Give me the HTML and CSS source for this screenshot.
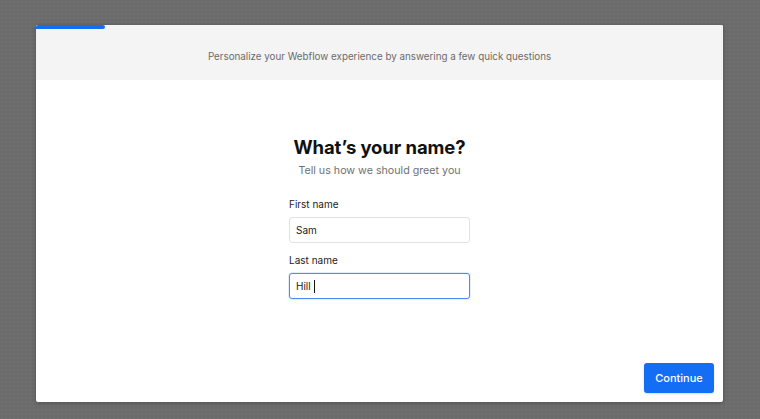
FILE: index.html
```html
<!DOCTYPE html>
<html lang="en">

<head>
    <meta charset="UTF-8">
    <meta name="viewport" content="width=device-width, initial-scale=1.0">
    <title>Personalize Webflow</title>
    <link rel="stylesheet" href="styles.css">
</head>

<body>
    <div class="modal">
        <div class="modal-header">
            <div class="progress"></div>
            <p class="intro">Personalize your Webflow experience by answering a few quick questions</p>
        </div>

        <div class="modal-body">
            <h1 class="title">What’s your name?</h1>
            <p class="subtitle">Tell us how we should greet you</p>

            <form class="name-form">
                <label class="field">
                    <span class="field-label">First name</span>
                    <input class="field-input" type="text" value="Sam">
                </label>
                <label class="field">
                    <span class="field-label">Last name</span>
                    <span class="field-input focused">Hill<span class="caret"></span></span>
                </label>
            </form>
        </div>

        <div class="modal-footer">
            <button class="continue-button">Continue</button>
        </div>
    </div>
</body>

</html>
```

FILE: styles.css
```css
html,
body {
    height: 100%;
}

body {
    margin: 0;
    font-family: Inter, 'Noto Sans', sans-serif;
    background-color: #6b6b6b;
    background-image: radial-gradient(rgba(255, 255, 255, 0.03) 1px, transparent 1px);
    background-size: 4px 4px;
    padding: 25px 37px 17px 36px;
    box-sizing: border-box;
}

.modal {
    height: 377px;
    background-color: #fff;
    border-radius: 2px;
    overflow: hidden;
    display: flex;
    flex-direction: column;
    box-shadow: 0 1px 4px rgba(0, 0, 0, 0.25);
}

.modal-header {
    position: relative;
    height: 55px;
    box-sizing: border-box;
    padding-top: 7px;
    background-color: #f4f4f4;
    display: flex;
    align-items: center;
    justify-content: center;
}

.progress {
    position: absolute;
    top: 0;
    left: 0;
    width: 69px;
    height: 4px;
    background-color: #146ef5;
    border-radius: 0 3px 3px 0;
}

.intro {
    margin: 0;
    font-size: 9.8px;
    color: #6b6b6b;
}

.modal-body {
    flex: 1;
    display: flex;
    flex-direction: column;
    align-items: center;
    padding-top: 56px;
}

.title {
    margin: 0;
    font-size: 18.5px;
    line-height: 22px;
    font-weight: 700;
    letter-spacing: -0.1px;
    color: #111;
}

.subtitle {
    margin: 6px 0 0;
    font-size: 10.7px;
    line-height: 13px;
    color: #707070;
}

.name-form {
    margin-top: 21px;
    width: 181px;
    display: flex;
    flex-direction: column;
    gap: 11px;
}

.field {
    display: flex;
    flex-direction: column;
    gap: 7px;
}

.field-label {
    font-size: 10px;
    line-height: 12px;
    color: #222;
}

.field-input {
    display: flex;
    align-items: center;
    height: 26px;
    box-sizing: border-box;
    padding: 0 6px;
    border: 1px solid #e2e2e2;
    border-radius: 3px;
    font-family: inherit;
    font-size: 10px;
    color: #1a1a1a;
    background-color: #fff;
    outline: none;
}

.field-input.focused {
    border-color: #4a8cf0;
    box-shadow: 0 0 0 1px rgba(20, 110, 245, 0.12);
}

.caret {
    display: inline-block;
    width: 1px;
    height: 13px;
    margin-left: 3px;
    background-color: #111;
}

.modal-footer {
    display: flex;
    justify-content: flex-end;
    padding: 0 9px 9px 0;
}

.continue-button {
    width: 70px;
    height: 30px;
    border: none;
    border-radius: 3px;
    background-color: #146ef5;
    color: #fff;
    font-family: inherit;
    font-size: 11px;
    font-weight: 500;
    cursor: pointer;
    box-shadow: 0 1px 2px rgba(0, 0, 0, 0.15);
}
```
